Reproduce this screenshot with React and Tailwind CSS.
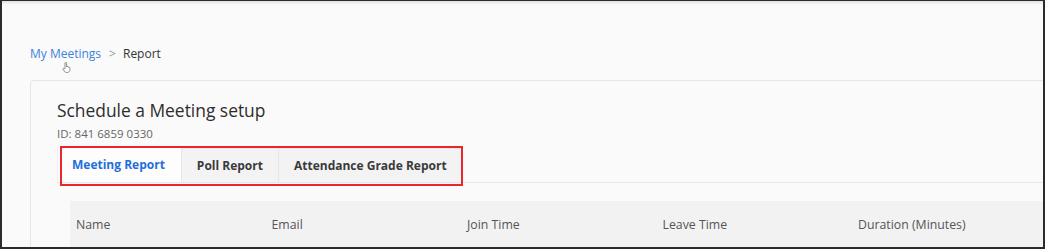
import React from "react";

const columns = ["Name", "Email", "Join Time", "Leave Time", "Duration (Minutes)"];

const tabs = [
  { label: "Meeting Report", active: true },
  { label: "Poll Report" },
  { label: "Attendance Grade Report" },
];

const HandCursor = () => (
  <svg width="9" height="11" viewBox="0 0 9 11" className="absolute left-[60px] top-[61px]">
    <path
      d="M3 1v5.5M3 1.2a.8.8 0 0 1 1.6 0V5M4.6 4.5h1.3a.7.7 0 0 1 .7.7V5.4h.6a.7.7 0 0 1 .7.7v1.6c0 1.6-1.1 2.8-2.7 2.8H4.4c-1 0-1.7-.5-2.2-1.3L1 7.2a.7.7 0 0 1 1.1-.8L3 7.2"
      fill="#fff"
      stroke="#777"
      strokeWidth="0.8"
      strokeLinejoin="round"
    />
  </svg>
);

export default function App() {
  return (
    <div className="relative w-[1045px] h-[249px] overflow-hidden bg-[#fafafa] border-t border-l-2 border-r-2 border-b-2 border-[#2b2b2b] font-['Open_Sans',sans-serif]">
      <div className="absolute inset-x-0 top-0 h-[4px] bg-gradient-to-b from-[#e2e2e2] to-transparent" />
      <HandCursor />

      <div className="pl-[28px] pt-[44px]">
        <div className="flex items-center text-[12px] leading-[18px]">
          <span className="text-[#3c82dc]">My Meetings</span>
          <span className="ml-[8px] mr-[7px] text-[#999]">&gt;</span>
          <span className="text-[#333]">Report</span>
        </div>

        <div className="mt-[17px] w-[1100px] h-[200px] rounded-[4px] border border-[#e6e6e6] bg-[#fafafa] pl-[26px] pt-[16px]">
          <h1 className="text-[17.4px] leading-[26px] text-[#2d2d2d] font-normal">Schedule a Meeting setup</h1>
          <div className="mt-[3px] text-[11.5px] leading-[16px] text-[#666]">ID: 841 6859 0330</div>

          <div className="relative mt-[6px] flex h-[35px] border-b border-[#e8e8e8]">
            <div className="flex border-l border-[#ececec]">
              {tabs.map((t) => (
                <div
                  key={t.label}
                  className={
                    t.active
                      ? "flex items-center pl-[14px] pr-[16px] bg-[#fdfdfd] border-r border-[#e6e6e6] text-[12px] font-bold text-[#1f6fdb]"
                      : "flex items-center px-[15px] bg-[#f3f3f3] border-r border-t border-[#e6e6e6] text-[12px] font-bold text-[#3a3a3a]"
                  }
                >
                  {t.label}
                </div>
              ))}
            </div>
            <div className="absolute left-[3px] top-[-2px] w-[403px] h-[40px] border-2 border-[#e8262b]" />
          </div>

          <div className="ml-[13px] mt-[18px] flex h-[48px] items-center bg-[#f2f2f2] pl-[6px] text-[12.3px] text-[#555]">
            {columns.map((c) => (
              <div key={c} className="w-[195.5px] shrink-0">
                {c}
              </div>
            ))}
          </div>
        </div>
      </div>
    </div>
  );
}
